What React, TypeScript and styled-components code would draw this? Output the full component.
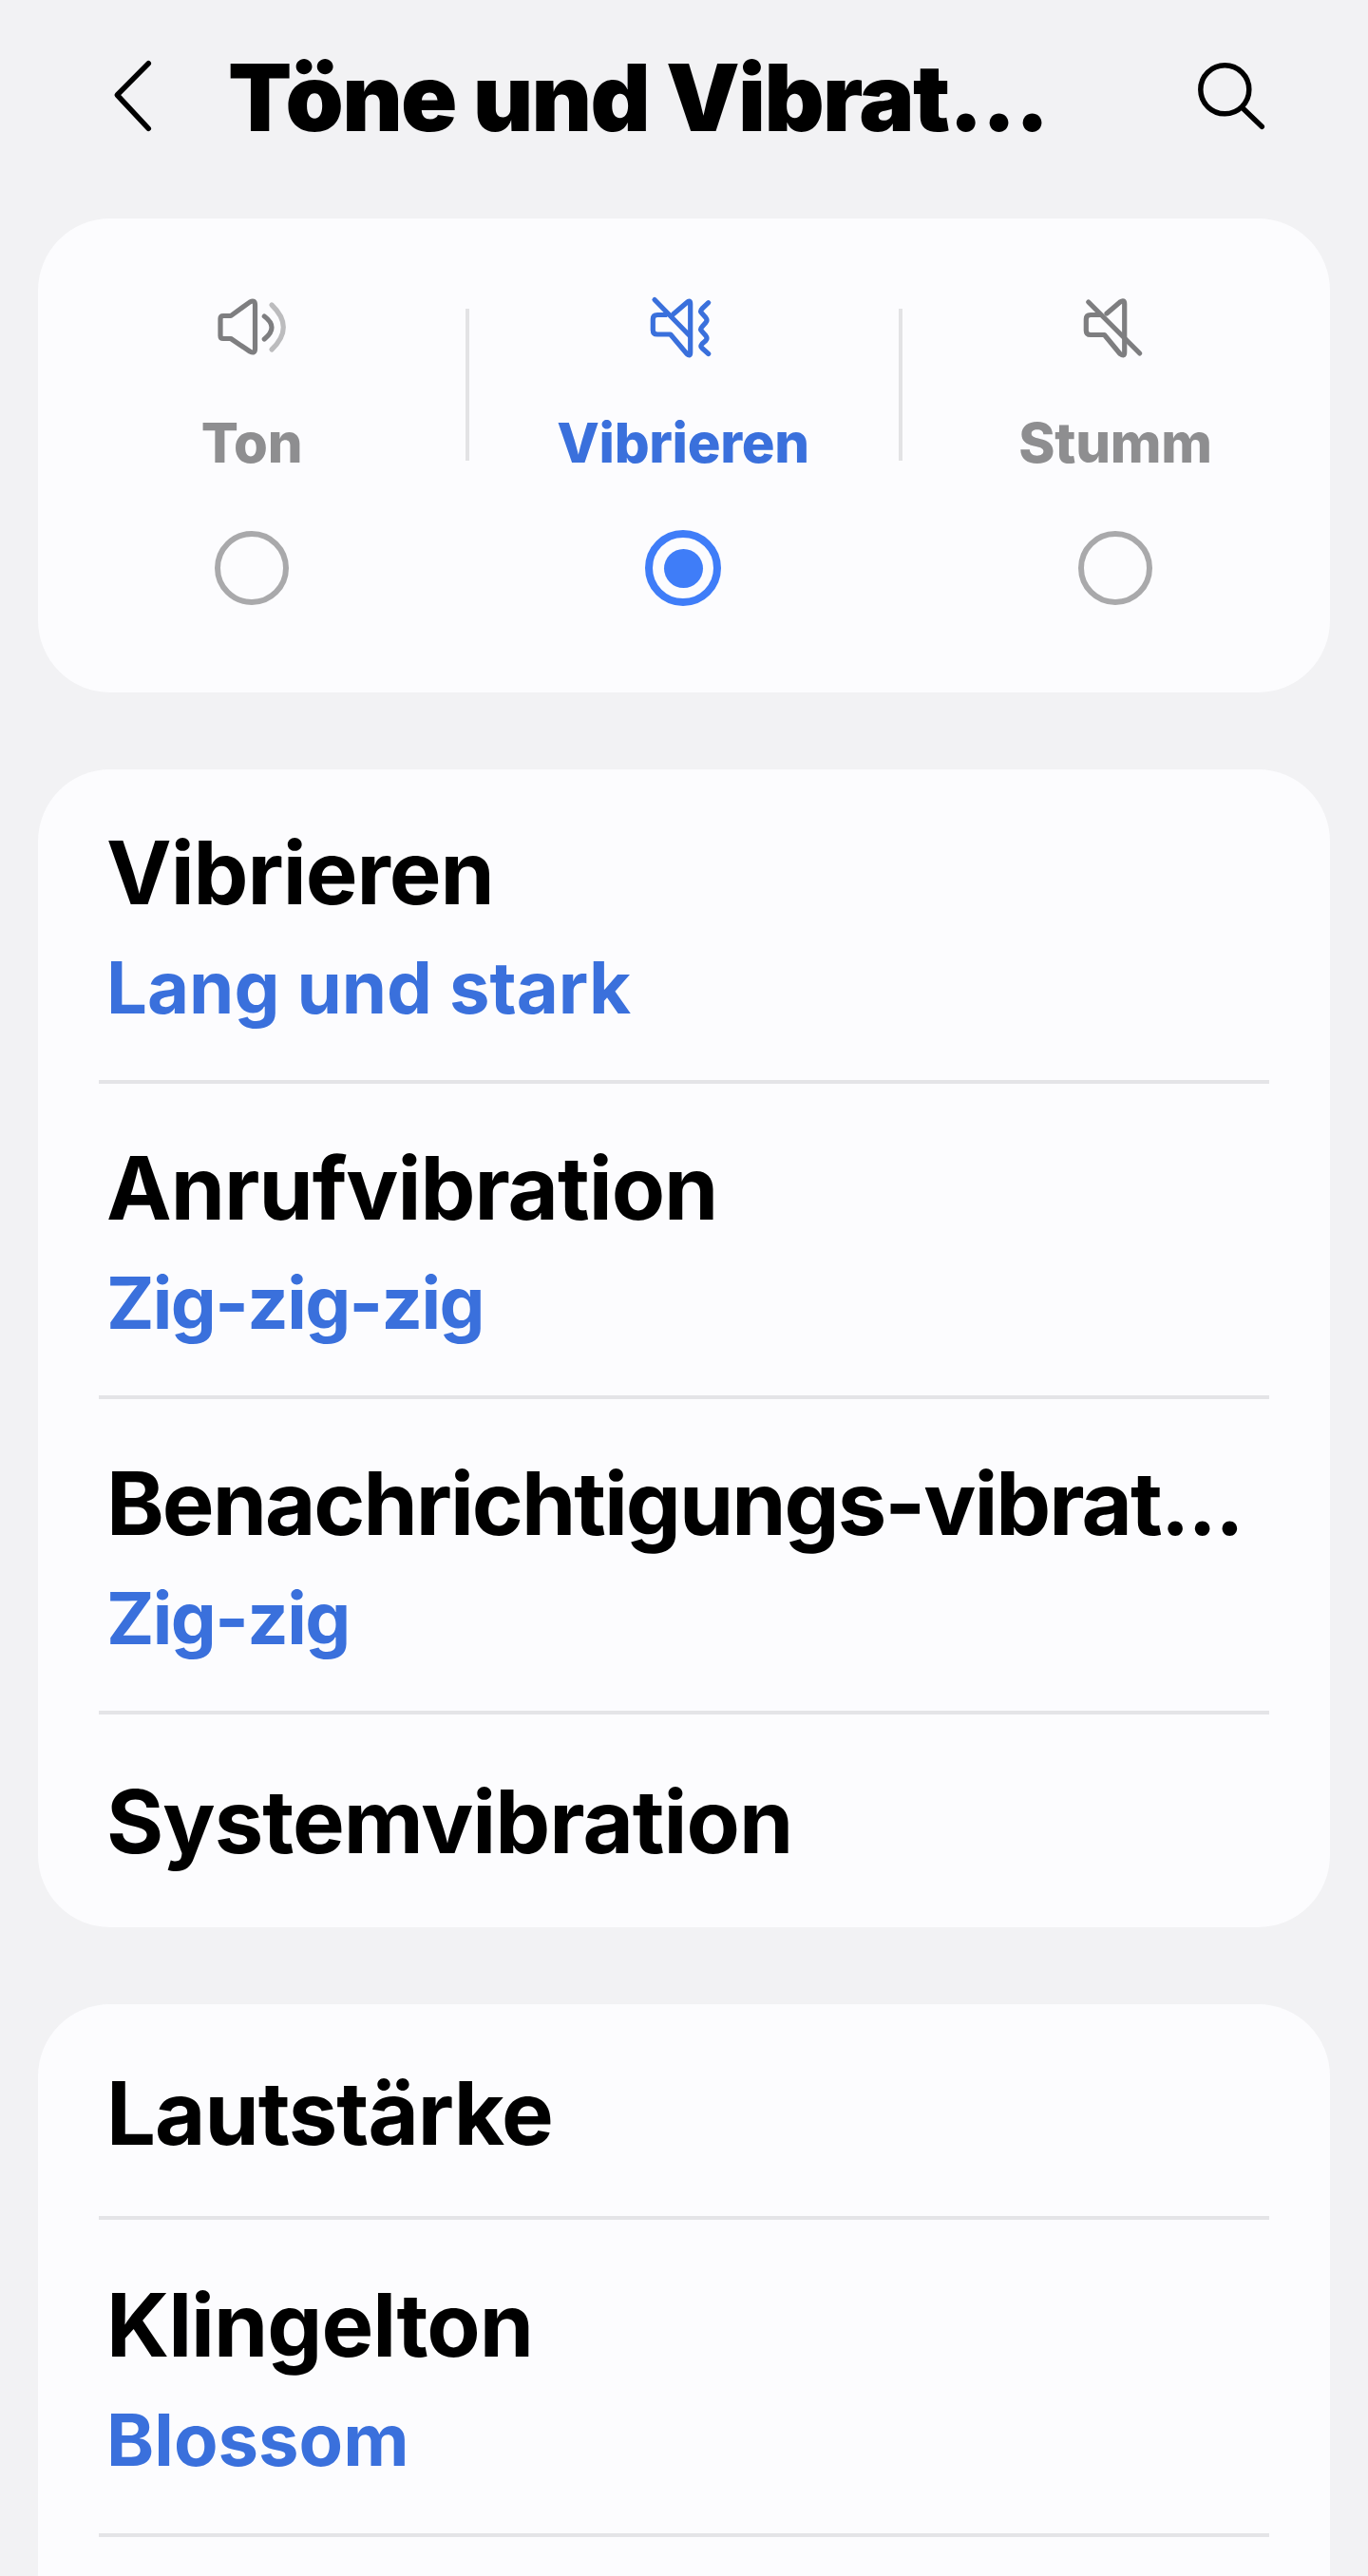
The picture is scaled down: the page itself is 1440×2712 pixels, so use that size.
import React from "react";
import styled, { createGlobalStyle } from "styled-components";

const Global = createGlobalStyle`
  html, body { margin: 0; padding: 0; background: #f2f2f4; }
  body { font-family: "Inter", "Noto Sans", sans-serif; }
`;
const Page = styled.div`
  width: 1440px; height: 2712px; overflow: hidden; background: #f2f2f4;
  display: flex; flex-direction: column;
`;
const Header = styled.header`
  height: 230px; flex: none; display: flex; align-items: center; padding: 0 100px 30px 116px; box-sizing: border-box;
`;
const Title = styled.h1`
  margin: 6px 0 0 78px; flex: 1; font-size: 98px; line-height: 120px; font-weight: 900; color: #000; letter-spacing: -1.7px; white-space: nowrap;
`;
const Card = styled.section`
  margin: 0 40px 81px; background: #fcfcfe; border-radius: 76px; flex: none;
`;
const ModeCard = styled(Card)`
  height: 499px; display: grid; grid-template-columns: 450px 458px 452px; padding: 77px 0 0; box-sizing: border-box;
`;
const Mode = styled.div<{ $divider?: number }>`
  display: flex; flex-direction: column; align-items: center; position: relative;
  ${p => p.$divider !== undefined ? `&::before { content: ""; position: absolute; left: ${p.$divider}px; top: 18px; width: 4px; height: 160px; background: #e3e3e5; }` : ""}
`;
const ModeLabel = styled.div<{ $active?: boolean }>`
  margin-top: 52px; font-size: 58px; line-height: 64px; font-weight: 800; letter-spacing: -0.3px; color: ${p => p.$active ? "#3a70dc" : "#8e8e90"};
`;
const Radio = styled.div<{ $active?: boolean }>`
  margin-top: ${p => p.$active ? "60px" : "61px"}; width: ${p => p.$active ? "80px" : "78px"}; height: ${p => p.$active ? "80px" : "78px"}; box-sizing: border-box; border-radius: 50%;
  border: ${p => p.$active ? "8px solid #3f7df8" : "6px solid #a9a9ab"}; display: flex; align-items: center; justify-content: center;
  &::after { content: ""; width: 41px; height: 41px; border-radius: 50%; background: ${p => p.$active ? "#3f7df8" : "transparent"}; }
`;
const Row = styled.div<{ $h: number; $two?: boolean; $last?: boolean }>`
  height: ${p => p.$h}px; box-sizing: border-box; padding: ${p => p.$two ? "7px" : "2px"} 40px 0 72px; display: flex; flex-direction: column; justify-content: center; position: relative;
  ${p => p.$last ? "" : `&::after { content: ""; position: absolute; left: 64px; right: 64px; bottom: 0; height: 4px; background: #e4e4e7; }`}
`;
const RowTitle = styled.div<{ $tight?: boolean }>`
  font-size: 92px; line-height: 120px; font-weight: 700; color: #000; white-space: nowrap; letter-spacing: ${p => p.$tight ? "-2px" : "-1px"};
`;
const RowValue = styled.div<{ $tight?: boolean }>`
  font-size: 76px; line-height: 120px; font-weight: 700; color: #3a70dc; letter-spacing: ${p => p.$tight ? "-1.6px" : "0"};
`;

const Back = () => (
  <svg width="46" height="80" viewBox="0 0 46 80" fill="none" stroke="#000" strokeWidth="5.5" strokeLinecap="round" strokeLinejoin="round">
    <path d="M40.3 6.7 L7.3 40 L40.3 75.3" />
  </svg>
);
const Search = () => (
  <svg width="90" height="100" viewBox="0 0 90 100" fill="none" stroke="#000" strokeWidth="5.5" strokeLinecap="round">
    <circle cx="39.3" cy="44.3" r="25.5" />
    <path d="M59.3 65 L78.3 83.3" />
  </svg>
);
const SoundIcon = () => (
  <svg width="90" height="75" viewBox="0 0 90 75" fill="none" stroke="#7e7e80" strokeWidth="5.2" strokeLinecap="round" strokeLinejoin="round">
    <path d="M15 25.5 H23 L43 11 Q48.5 8 48.5 14 V60 Q48.5 66 43 63 L23 49.5 H15 Q12 49.5 12 46.5 V28.5 Q12 25.5 15 25.5 Z" />
    <path d="M58.3 26 Q73.7 37.5 58.3 50" />
    <path d="M66 14 Q90.6 37.5 66 61" stroke="#bcbcbe" />
  </svg>
);
const VibrateIcon = () => (
  <svg width="90" height="75" viewBox="0 0 90 75" fill="none" stroke="#3a70dc" strokeWidth="5.2" strokeLinecap="round" strokeLinejoin="round">
    <path d="M15 8.5 L51.5 46" />
    <path d="M26.5 24.5 H18 Q13.3 24.5 13.3 29 V40.5 Q13.3 45 18 45 H31.7 L49 65.5 Q52.7 69 52.7 64 V13 Q52.7 8 49 11.5 L35 23.5" />
    <path d="M71.7 11.7 L65 18 Q62.5 20.5 65 23 L69 27.5 Q71 30 69 32.5 L65 37 Q62.5 39.5 65 42 L69 46.5 Q71 49 69 51.5 L65 55 Q63 57.5 65 59.5 L71.7 65.5" />
  </svg>
);
const MuteIcon = () => (
  <svg width="90" height="75" viewBox="0 0 90 75" fill="none" stroke="#7e7e80" strokeWidth="5.2" strokeLinecap="round" strokeLinejoin="round">
    <path d="M16.7 11 L70.7 65" />
    <path d="M28.5 24.5 H19 Q14.3 24.5 14.3 29 V41 Q14.3 45.5 19 45.5 H33.5 L50 65.5 Q54.7 69 54.7 64 V13 Q54.7 8 50 11 L36 23" />
  </svg>
);

export default function App() {
  return (
    <Page>
      <Global />
      <Header>
        <Back />
        <Title>Töne und Vibrat...</Title>
        <Search />
      </Header>
      <ModeCard>
        <Mode><SoundIcon /><ModeLabel>Ton</ModeLabel><Radio /></Mode>
        <Mode $divider={0}><VibrateIcon /><ModeLabel $active>Vibrieren</ModeLabel><Radio $active /></Mode>
        <Mode $divider={-2}><MuteIcon /><ModeLabel>Stumm</ModeLabel><Radio /></Mode>
      </ModeCard>
      <Card>
        <Row $h={331} $two><RowTitle>Vibrieren</RowTitle><RowValue>Lang und stark</RowValue></Row>
        <Row $h={332} $two><RowTitle>Anrufvibration</RowTitle><RowValue $tight>Zig-zig-zig</RowValue></Row>
        <Row $h={332} $two><RowTitle $tight>Benachrichtigungs-vibrat...</RowTitle><RowValue $tight>Zig-zig</RowValue></Row>
        <Row $h={224} $last><RowTitle>Systemvibration</RowTitle></Row>
      </Card>
      <Card>
        <Row $h={227}><RowTitle>Lautstärke</RowTitle></Row>
        <Row $h={334} $two><RowTitle>Klingelton</RowTitle><RowValue>Blossom</RowValue></Row>
        <Row $h={200} $last />
      </Card>
    </Page>
  );
}
